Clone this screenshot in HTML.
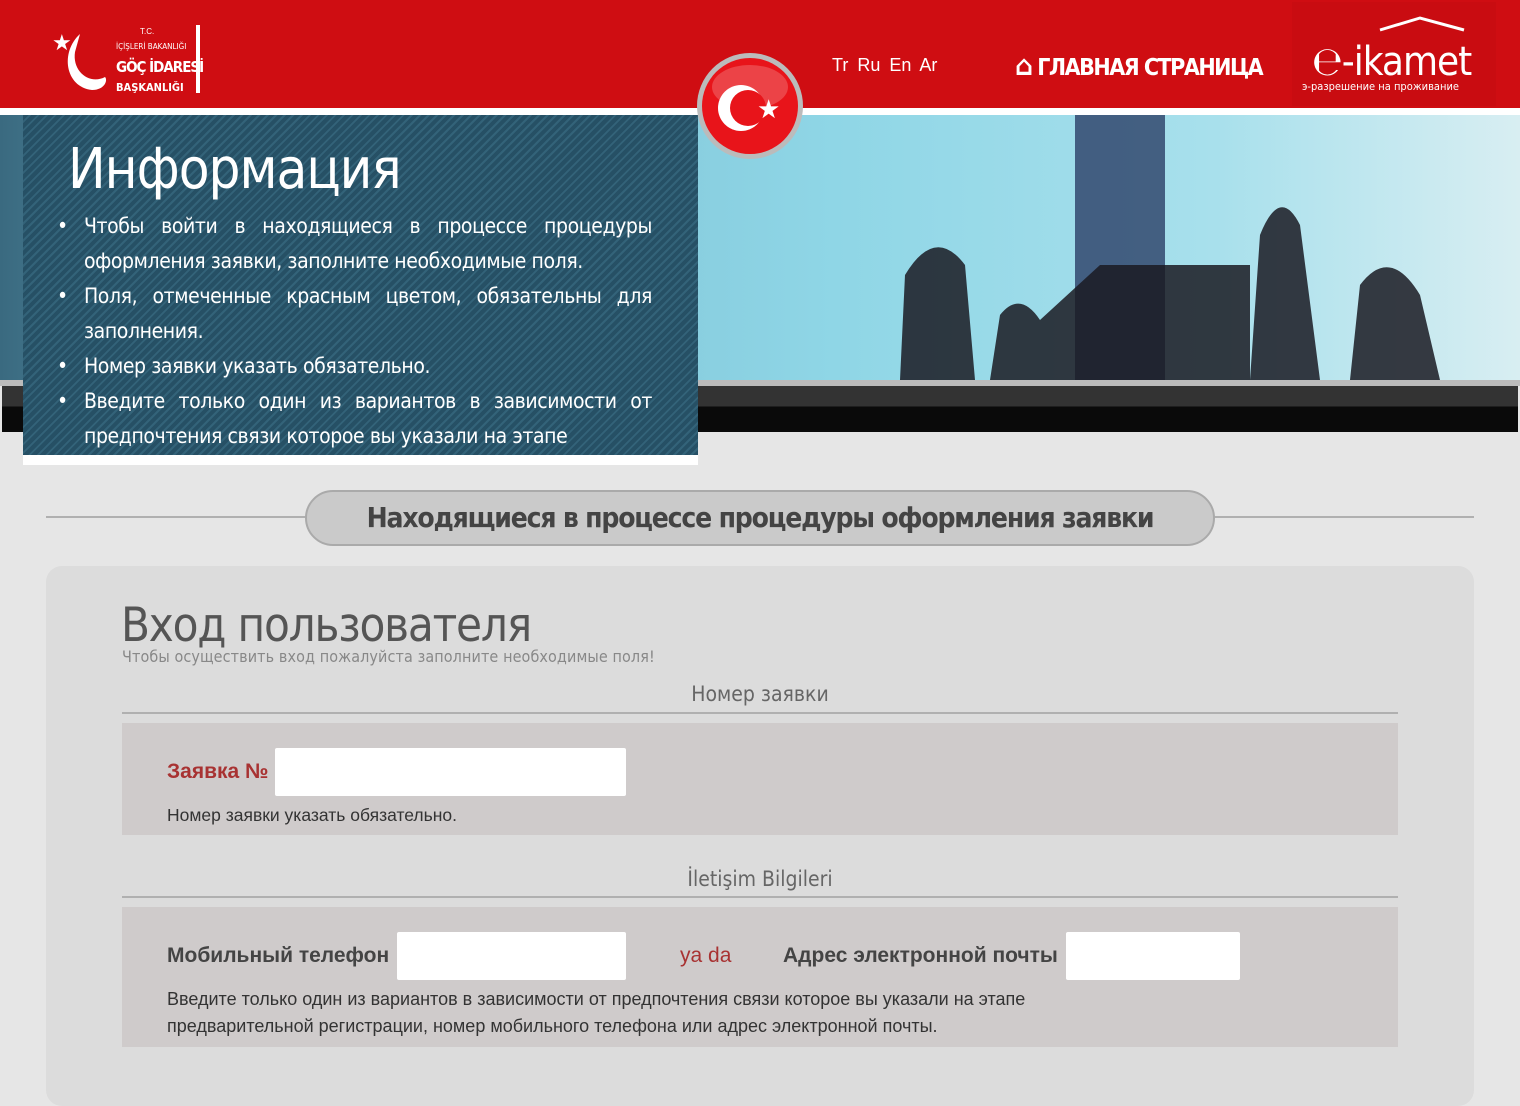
<!DOCTYPE html>
<html><head><meta charset="utf-8"><style>
*{margin:0;padding:0;box-sizing:border-box}
body{width:1520px;height:1090px;overflow:hidden;background:#e6e6e6;font-family:"Liberation Sans",sans-serif;position:relative}
.hdr{position:absolute;left:0;top:0;width:1520px;height:108px;background:#cf0d12}
.wl{position:absolute;left:0;top:108px;width:1520px;height:7px;background:#fff}
.img{position:absolute;left:0;top:115px;width:1520px;height:265px;background:linear-gradient(90deg,#3a6a80 0%,#7fc3d6 30%,#8fd6e6 55%,#a8e0ec 80%,#d8eef2 100%);overflow:hidden}
.bar1{position:absolute;left:0;top:380px;width:1520px;height:6px;background:#bbb}
.bar2{position:absolute;left:2px;top:386px;width:1516px;height:46px;background:linear-gradient(#333 0,#333 45%,#0a0a0a 45%)}
.info{position:absolute;left:23px;top:115px;width:675px;height:350px;background:#fff}
.info .in{position:absolute;left:0;top:0;width:675px;height:340px;background:repeating-linear-gradient(135deg,#1b475d 0 4px,#285b72 4px 6px);opacity:.95}
.info h1{position:absolute;left:45px;top:22px;color:#fff;font-weight:normal;font-size:56px;font-family:"DejaVu Sans Condensed","Liberation Sans",sans-serif;letter-spacing:-1px}
.info ul{position:absolute;left:61px;top:94px;width:568px;color:#fff;font-size:21px;line-height:35px;list-style:none;font-family:"DejaVu Sans Condensed","Liberation Sans",sans-serif;text-align:justify;letter-spacing:-.4px}
.info li{position:relative}
.info li:before{content:"•";position:absolute;left:-27px}
.lang{position:absolute;left:832px;top:55px;color:#fff;font-size:18px;word-spacing:4px}
.home{position:absolute;left:1015px;top:49px;color:#fff;font-size:23px;font-weight:bold;font-family:"DejaVu Sans Condensed",sans-serif;letter-spacing:-1.5px}
.eik{position:absolute;left:1292px;top:2px;width:204px;height:104px;background:#c90c11}
.line{position:absolute;height:2px;background:#b0b0b0}
.pill{position:absolute;left:305px;top:490px;width:910px;height:56px;border:2px solid #aaa;border-radius:28px;background:#cacaca;text-align:center;font-size:28px;font-weight:bold;line-height:52px;color:#444;font-family:"DejaVu Sans Condensed",sans-serif;letter-spacing:-1.2px}
.card{position:absolute;left:46px;top:566px;width:1428px;height:540px;background:#dcdcdc;border-radius:16px}
.t{position:absolute;color:#555}
.box{position:absolute;left:122px;width:1276px;background:#cfcbcb}
.inp{position:absolute;background:#fff;border-radius:2px}
.lab{position:absolute;font-weight:bold;font-size:21px}
</style></head><body>
<div class="hdr"></div>
<svg style="position:absolute;left:50px;top:22px" width="160" height="74">
<text x="2" y="28" fill="#fff" font-size="22">★</text>
<path d="M30 12 C10 30 15 65 42 68 C55 68 58 58 55 55 C40 63 22 50 25 30 Z" fill="#fff"/>
<text x="90" y="12" fill="#fff" font-size="8">T.C.</text>
<text x="66" y="27" fill="#fff" font-size="8" font-family="DejaVu Sans Condensed">İÇİŞLERİ BAKANLIĞI</text>
<text x="66" y="50" fill="#fff" font-size="15" font-weight="bold" font-family="DejaVu Sans Condensed" letter-spacing="-1">GÖÇ İDARESİ</text>
<text x="66" y="69" fill="#fff" font-size="11" font-weight="bold" font-family="DejaVu Sans Condensed">BAŞKANLIĞI</text>
<rect x="146" y="3" width="4" height="68" fill="#fff"/>
</svg>
<div class="lang">Tr Ru En Ar</div>
<div class="home"><span style="font-size:28px">⌂</span> ГЛАВНАЯ СТРАНИЦА</div>
<div class="eik">
<svg width="204" height="104"><path d="M88 28 L128 16 L172 28" stroke="#fff" stroke-width="3" fill="none"/>
<text x="20" y="73" fill="#fff" font-size="40" font-family="DejaVu Sans Condensed" letter-spacing="-1">℮-ikamet</text>
<text x="10" y="88" fill="#fff" font-size="11" font-family="DejaVu Sans Condensed">э-разрешение на проживание</text></svg>
</div>
<div class="wl"></div>
<div class="img">
<svg width="1520" height="265" style="position:absolute;left:0;top:0">
<rect x="1075" y="0" width="90" height="265" fill="#2a3f66" opacity=".8"/>
<path d="M900 265 L905 160 Q935 110 965 150 L975 265Z M990 265 L1000 200 Q1020 175 1040 205 L1100 150 L1250 150 L1250 265Z M1250 265 L1260 120 Q1280 70 1300 110 L1320 265Z M1350 265 L1360 170 Q1390 130 1420 180 L1440 265Z" fill="#1a1a22" opacity=".85"/>
</svg>
</div>
<div class="bar1"></div><div class="bar2"></div>
<div class="info"><div class="in"></div>
<h1>Информация</h1>
<ul><li>Чтобы войти в находящиеся в процессе процедуры оформления заявки, заполните необходимые поля.</li>
<li>Поля, отмеченные красным цветом, обязательны для заполнения.</li>
<li>Номер заявки указать обязательно.</li>
<li>Введите только один из вариантов в зависимости от предпочтения связи которое вы указали на этапе</li></ul>
<div style="position:absolute;left:0;top:340px;width:675px;height:10px;background:#fff"></div>
</div>
<svg style="position:absolute;left:695px;top:52px" width="110" height="110">
<circle cx="55" cy="54" r="53" fill="#bbb"/><circle cx="55" cy="54" r="48" fill="#e8141a"/>
<ellipse cx="55" cy="35" rx="38" ry="22" fill="#fff" opacity=".2"/>
<circle cx="46" cy="56" r="23" fill="#fff"/><circle cx="53" cy="56" r="18" fill="#e8141a"/>
<text x="62" y="66" fill="#fff" font-size="26">★</text></svg>
<div class="line" style="left:46px;top:516px;width:1428px"></div>
<div class="pill">Находящиеся в процессе процедуры оформления заявки</div>
<div class="card"></div>
<div class="t" style="left:121px;top:598px;font-size:47px;font-family:'DejaVu Sans Condensed',sans-serif;letter-spacing:-1.2px">Вход пользователя</div>
<div class="t" style="left:122px;top:647px;font-size:16px;color:#888;font-family:'DejaVu Sans Condensed',sans-serif;letter-spacing:.1px">Чтобы осуществить вход пожалуйста заполните необходимые поля!</div>
<div class="t" style="left:122px;width:1276px;top:682px;text-align:center;font-size:21px;color:#666;font-family:'DejaVu Sans Condensed',sans-serif">Номер заявки</div>
<div class="line" style="left:122px;top:712px;width:1276px"></div>
<div class="box" style="top:723px;height:112px"></div>
<div class="lab" style="left:167px;top:760px;color:#a83232">Заявка №</div>
<div class="inp" style="left:275px;top:748px;width:351px;height:48px"></div>
<div class="t" style="left:167px;top:805px;font-size:17.5px;color:#333">Номер заявки указать обязательно.</div>
<div class="t" style="left:122px;width:1276px;top:867px;text-align:center;font-size:21px;color:#666;font-family:'DejaVu Sans Condensed',sans-serif">İletişim Bilgileri</div>
<div class="line" style="left:122px;top:896px;width:1276px"></div>
<div class="box" style="top:907px;height:140px"></div>
<div class="lab" style="left:167px;top:944px;color:#444">Мобильный телефон</div>
<div class="inp" style="left:397px;top:932px;width:229px;height:48px"></div>
<div class="lab" style="left:680px;top:944px;color:#a83232;font-weight:normal">ya da</div>
<div class="lab" style="left:783px;top:944px;color:#444">Адрес электронной почты</div>
<div class="inp" style="left:1066px;top:932px;width:174px;height:48px"></div>
<div class="t" style="left:167px;top:986px;font-size:18px;color:#333;line-height:27px;width:900px">Введите только один из вариантов в зависимости от предпочтения связи которое вы указали на этапе предварительной регистрации, номер мобильного телефона или адрес электронной почты.</div>
</body></html>
